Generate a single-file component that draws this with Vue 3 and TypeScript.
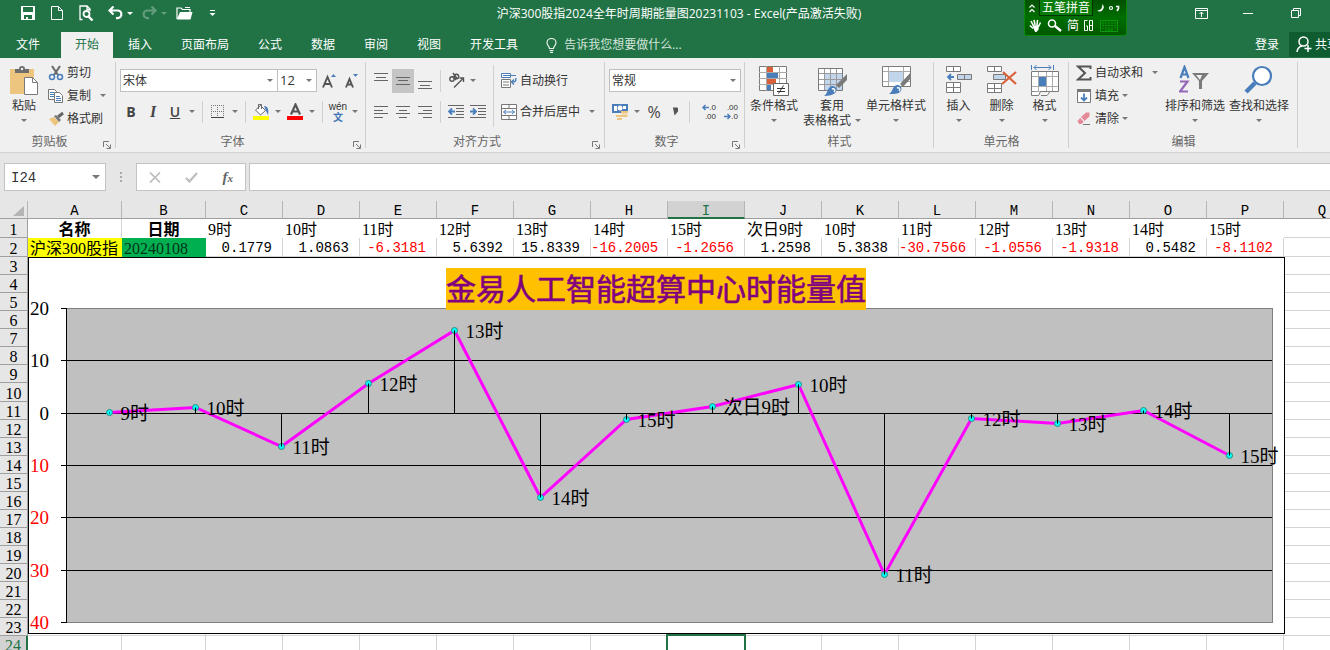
<script setup lang="ts">
interface Cell {
  label: string
  value: number
}

const series: Cell[] = [
  { label: '9时', value: 0.1779 },
  { label: '10时', value: 1.0863 },
  { label: '11时', value: -6.3181 },
  { label: '12时', value: 5.6392 },
  { label: '13时', value: 15.8339 },
  { label: '14时', value: -16.2005 },
  { label: '15时', value: -1.2656 },
  { label: '次日9时', value: 1.2598 },
  { label: '10时', value: 5.3838 },
  { label: '11时', value: -30.7566 },
  { label: '12时', value: -1.0556 },
  { label: '13时', value: -1.9318 },
  { label: '14时', value: 0.5482 },
  { label: '15时', value: -8.1102 },
]

const columns = 'ABCDEFGHIJKLMNOPQ'.split('')
const blankRows = Array.from({ length: 22 }, (_, i) => i + 3)
const tabs = ['插入', '页面布局', '公式', '数据', '审阅', '视图', '开发工具']

const plot = { left: 38, right: 1244, top: 51, bottom: 365, max: 20, min: -40 }
const scale = (plot.bottom - plot.top) / (plot.max - plot.min)
const step = (plot.right - plot.left) / series.length
const yOf = (v: number) => Math.round(plot.top + (plot.max - v) * scale) + 0.5
const points = series.map((s, i) => ({
  label: s.label,
  x: Math.round(plot.left + step * (i + 0.5)) + 0.5,
  y: yOf(s.value),
}))
const path = points.map((p) => `${p.x},${p.y}`).join(' ')
const ticks = [20, 10, 0, -10, -20, -30, -40]
</script>

<template>
  <div class="app">
    <header class="titlebar">
      <div class="qat">
        <button class="q" aria-label="保存">
          <svg width="14" height="14" viewBox="0 0 14 14"><path d="M0 0h14v14H0z" fill="#fff" /><path d="M2 1h10v5H2zM3 9h8v4H7v-2H5v2H3z" fill="#217346" /></svg>
        </button>
        <button class="q" aria-label="新建">
          <svg width="12" height="14" viewBox="0 0 12 14"><path d="M.5.5h7l4 4v9H.5zM7.500 .5v4h4" fill="none" stroke="#fff" /></svg>
        </button>
        <button class="q" aria-label="打印预览">
          <svg width="15" height="16" viewBox="0 0 15 16"><path d="M3.500 14.500H1V1h7l3 3v2M8 1v3.500h3" fill="none" stroke="#fff" stroke-width="1.300" /><circle cx="7.500" cy="9" r="3" fill="none" stroke="#fff" stroke-width="1.800" /><path d="M9.500 11.500l4 4" stroke="#fff" stroke-width="2.400" /></svg>
        </button>
        <button class="q q-undo" aria-label="撤消">
          <svg width="15" height="14" viewBox="0 0 15 14"><path d="M1 4.500h8.500a3.800 3.800 0 0 1 0 7.700H8M5.500 .5L1.500 4.500l4 4" fill="none" stroke="#fff" stroke-width="2.200" /></svg>
          <i class="caret light"></i>
        </button>
        <button class="q q-undo dim" aria-label="恢复">
          <svg width="15" height="14" viewBox="0 0 15 14"><path d="M14 4.500H5.500a3.800 3.800 0 0 0 0 7.700H7M9.500 .5l4 4-4 4" fill="none" stroke="#fff" stroke-width="2.200" /></svg>
          <i class="caret light"></i>
        </button>
        <button class="q" aria-label="打开">
          <svg width="17" height="14" viewBox="0 0 17 14"><path d="M1 13V2h4l1.500 1.500H14V6" fill="none" stroke="#fff" stroke-width="1.200" /><path d="M1 13L4 6h12.500L14.500 13.500H1z" fill="#fff" /><path d="M9 1.500h5" stroke="#fff" /></svg>
        </button>
        <button class="q q-more" aria-label="自定义快速访问工具栏">
          <svg width="7" height="7" viewBox="0 0 7 7"><path d="M1 .5h5" stroke="#fff" /><path d="M.5 3h6L3.500 6z" fill="#fff" /></svg>
        </button>
      </div>
      <h1>沪深300股指2024全年时周期能量图20231103 - Excel(产品激活失败)</h1>
      <div class="winctl">
        <button aria-label="功能区显示选项">
          <svg width="13" height="11" viewBox="0 0 13 11"><path d="M.5.5h12v10H.5zM.5 2.500h12M6.500 4v5M4.500 6l2-2 2 2" fill="none" stroke="#fff" /></svg>
        </button>
        <button aria-label="最小化"><svg width="10" height="11" viewBox="0 0 10 11"><path d="M0 5.500h10" stroke="#fff" /></svg></button>
        <button aria-label="还原"><svg width="10" height="10" viewBox="0 0 10 10"><path d="M.5 2.500h7v7h-7zM2.500 2.500v-2h7v7h-2" fill="none" stroke="#fff" /></svg></button>
      </div>
    </header>

    <nav class="tabs">
      <button class="file">文件</button>
      <button class="tab active">开始</button>
      <button v-for="t in tabs" :key="t" class="tab">{{ t }}</button>
      <button class="tell">
        <svg width="11" height="15" viewBox="0 0 11 15"><path d="M3.500 10.500C3.500 8 1 7.500 1 4.800a4.500 4.300 0 0 1 9 0C10 7.500 7.500 8 7.500 10.500zM3.500 12.500h4M4 14.300h3" fill="none" stroke="#e6f0ea" stroke-width="1.200" /></svg>
        告诉我您想要做什么...
      </button>
      <button class="login">登录</button>
      <button class="share">
        <svg width="16" height="17" viewBox="0 0 16 17"><circle cx="7.500" cy="5.500" r="4.500" fill="none" stroke="#fff" stroke-width="1.500" /><path d="M1 16c.5-4 2.500-5.500 5-6M12 9v7M8.500 12.500h7" fill="none" stroke="#fff" stroke-width="1.500" /></svg>
        <span>共享</span>
      </button>
    </nav>

    <aside class="ime" aria-label="输入法">
      <div class="ime-row">
        <svg width="6" height="9" viewBox="0 0 6 9"><path d="M.5 3.500L3 1l2.500 2.500M.5 8L3 5.500 5.500 8" fill="none" stroke="#fff" stroke-width="1.200" /></svg>
        <b>五笔拼音</b>
        <svg width="24" height="10" viewBox="0 0 24 10"><path d="M5 1a4 4 0 1 1-5 6.500C4 8 6 4 5 1z" fill="#fff" /><circle cx="14" cy="5" r="1.500" fill="none" stroke="#fff" stroke-width="1.200" /><path d="M19 3.500h2.500v2L20 8" fill="none" stroke="#fff" stroke-width="1.600" /></svg>
      </div>
      <div class="ime-row low">
        <svg width="13" height="13" viewBox="0 0 13 13"><path d="M2 2l2.500 5M5 .8L6 6M8.500 1L8 6M11.500 3.500L9.500 7.500M.8 6.500l3.500 3" stroke="#fff" stroke-width="1.600" /><path d="M3.500 6.500l6.500-.5-.5 4.500-2 2.500H6z" fill="#fff" /></svg>
        <svg width="15" height="13" viewBox="0 0 15 13"><circle cx="5" cy="4.500" r="3.500" fill="none" stroke="#fff" stroke-width="1.600" /><path d="M8 7l6 5" stroke="#fff" stroke-width="2.400" /></svg>
        <span>简</span>
        <svg width="9" height="11" viewBox="0 0 9 11"><path d="M3.500 .5h-3v10h3V6H2M5.500 .5h3v10h-3zM5.500 5.500h3" fill="none" stroke="#fff" /></svg>
        <svg width="18" height="12" viewBox="0 0 18 12"><path d="M.5.5h17v11H.5z" fill="none" stroke="#0a9a0a" /><path d="M2 3h14M2 5.500h14M2 8h14" stroke="#0a9a0a" stroke-dasharray="2 1" /><path d="M5 10h8" stroke="#0a9a0a" /></svg>
      </div>
    </aside>

    <section class="ribbon">
      <div class="group g-clip">
        <div class="body">
          <button class="big paste">
            <svg width="28" height="32" viewBox="0 0 28 32"><path d="M0 4h24v25H0z" fill="#eec57e" /><path d="M5 8V4h4a3 3 0 0 1 6 0h4v4z" fill="#6d6d6d" /><circle cx="12" cy="4" r="1.200" fill="#f0f0f0" /><path d="M14.500 12.500h8l5 5v12h-13z" fill="#fff" stroke="#7a7a7a" /><path d="M22.500 12.500v5h5" fill="none" stroke="#7a7a7a" /></svg>
            <span>粘贴</span>
            <i class="caret"></i>
          </button>
          <div class="stack">
            <button class="small">
              <svg width="16" height="16" viewBox="0 0 16 16"><path d="M4 1l6 9M12 1L6 10" stroke="#666" stroke-width="2" /><circle cx="4" cy="12" r="2.500" fill="none" stroke="#4a7ebb" stroke-width="1.500" /><circle cx="12" cy="12" r="2.500" fill="none" stroke="#4a7ebb" stroke-width="1.500" /></svg>
              <span>剪切</span>
            </button>
            <button class="small">
              <svg width="16" height="16" viewBox="0 0 16 16"><path d="M.5 1.500h6l2 2v8h-8z" fill="#fff" stroke="#777" /><path d="M2 4.500h4M2 6.500h4M2 8.500h4" stroke="#4a7ebb" /><path d="M6.500 4.500h5l3 3v7h-8z" fill="#fff" stroke="#777" /><path d="M8 8.500h4M8 10.500h5M8 12.500h5" stroke="#4a7ebb" /></svg>
              <span>复制</span>
              <i class="caret far"></i>
            </button>
            <button class="small">
              <svg width="16" height="16" viewBox="0 0 16 16"><path d="M1 8l5-2 5 5-4 4z" fill="#eec57e" /><path d="M6 5l2-1 5 5-2 2z" fill="#777" /><path d="M10 6l5-4" stroke="#666" stroke-width="3" /></svg>
              <span>格式刷</span>
            </button>
          </div>
        </div>
        <div class="caption"><span>剪贴板</span><button class="launch" aria-label="剪贴板选项"><svg width="8" height="8" viewBox="0 0 8 8"><path d="M.5 6V.5H6M3 3l4 4M7.500 3.500v4h-4" fill="none" stroke="#777" /></svg></button></div>
      </div>

      <div class="group g-font">
        <div class="body rows">
          <div class="line">
            <label class="pick font"><select aria-label="字体"><option>宋体</option></select><i class="caret"></i></label>
            <label class="pick size"><select aria-label="字号"><option>12</option></select><i class="caret"></i></label>
            <button class="ic grow" aria-label="增大字号"><svg width="15" height="16" viewBox="0 0 15 16"><path d="M1 14.500L5.500 4 10 14.500M2.500 11h6" fill="none" stroke="#555" stroke-width="1.900" /><path d="M9 4l2.500-3L14 4z" fill="#4a7ebb" /></svg></button>
            <button class="ic grow" aria-label="减小字号"><svg width="15" height="16" viewBox="0 0 15 16"><path d="M1 14.500L4.500 6 8 14.500M2 11.500h5" fill="none" stroke="#555" stroke-width="1.900" /><path d="M8 1h5l-2.500 3z" fill="#4a7ebb" /></svg></button>
          </div>
          <div class="line">
            <button class="ic glyph"><b>B</b></button>
            <button class="ic glyph it"><em>I</em></button>
            <button class="ic glyph"><u>U</u></button>
            <button class="drop" aria-label="下划线选项"><i class="caret"></i></button>
            <i class="sep"></i>
            <button class="ic" aria-label="边框"><svg width="14" height="14" viewBox="0 0 14 14"><path d="M.5 0v13M6.500 0v13M12.500 0v13M0 .5h13M0 6.500h13" stroke="#777" stroke-dasharray="1 1" /><path d="M0 12.500h13" stroke="#444" /></svg></button>
            <button class="drop" aria-label="边框选项"><i class="caret"></i></button>
            <i class="sep"></i>
            <button class="ic" aria-label="填充颜色"><svg width="17" height="17" viewBox="0 0 17 17"><path d="M2.500 7l5-4.500 5 5-5 4.500z" fill="#fff" stroke="#666" /><path d="M5.500 6V1.500h3V6" fill="none" stroke="#666" /><path d="M11 3c4 0 5 4 4 9l-2-4z" fill="#4a7ebb" /><path d="M0 13h16v4H0z" fill="#ff0" /></svg></button>
            <button class="drop" aria-label="填充颜色选项"><i class="caret"></i></button>
            <button class="ic" aria-label="字体颜色"><svg width="17" height="17" viewBox="0 0 17 17"><path d="M4 11.500L8.500 1.500l4.500 10M5.500 8.500h6" fill="none" stroke="#555" stroke-width="2.200" /><path d="M0 13h16v4H0z" fill="#f00" /></svg></button>
            <button class="drop" aria-label="字体颜色选项"><i class="caret"></i></button>
            <i class="sep"></i>
            <button class="ic wen" aria-label="拼音指南"><span>wén</span><span class="zh">文</span></button>
            <button class="drop" aria-label="拼音选项"><i class="caret"></i></button>
          </div>
        </div>
        <div class="caption"><span>字体</span><button class="launch" aria-label="字体选项"><svg width="8" height="8" viewBox="0 0 8 8"><path d="M.5 6V.5H6M3 3l4 4M7.500 3.500v4h-4" fill="none" stroke="#777" /></svg></button></div>
      </div>

      <div class="group g-align">
        <div class="body rows">
          <div class="line">
            <button class="ic" aria-label="顶端对齐"><svg width="14" height="16" viewBox="0 0 14 16"><path d="M0 .5h14M2 4.500h10M0 7.500h14" stroke="#666" /></svg></button>
            <button class="ic on" aria-label="垂直居中"><svg width="14" height="16" viewBox="0 0 14 16"><path d="M0 4.500h14M2 7.500h10M0 11.500h14" stroke="#666" /></svg></button>
            <button class="ic" aria-label="底端对齐"><svg width="14" height="16" viewBox="0 0 14 16"><path d="M0 8.500h14M2 12.500h10M0 15.500h14" stroke="#666" /></svg></button>
            <i class="sep"></i>
            <button class="ic" aria-label="方向"><svg width="17" height="17" viewBox="0 0 17 17"><g fill="none" stroke="#555" stroke-width="1.400"><circle cx="4" cy="7" r="2.200" /><path d="M4.500 4.500l3.500 3.500" /><circle cx="8.500" cy="4.500" r="2.200" /><path d="M5 1l4 5.500M6 15.500L15 6.500M11.500 6h4v4" /></g></svg></button>
            <button class="drop" aria-label="方向选项"><i class="caret"></i></button>
            <i class="sep tall after-drop"></i>
            <button class="small wide">
              <svg width="16" height="16" viewBox="0 0 16 16"><path d="M.5 .5h9v4h-9z" fill="#fff" stroke="#4a7ebb" /><path d="M2 2.500h13" stroke="#4a7ebb" /><path d="M.5 6.500h9v8h-9z" fill="#fff" stroke="#777" /><path d="M2 9h6M2 12h6" stroke="#777" /><path d="M15 5c0 4-1 4-4.500 4M13 6.500L10.500 9l2.500 2.500" fill="none" stroke="#4a7ebb" stroke-width="1.400" /></svg>
              <span>自动换行</span>
            </button>
          </div>
          <div class="line">
            <button class="ic" aria-label="左对齐"><svg width="14" height="12" viewBox="0 0 14 12"><path d="M0 .5h14M0 4.500h9M0 7.500h14M0 11.500h9" stroke="#666" /></svg></button>
            <button class="ic" aria-label="居中"><svg width="14" height="12" viewBox="0 0 14 12"><path d="M0 .5h14M3 4.500h8M0 7.500h14M3 11.500h8" stroke="#666" /></svg></button>
            <button class="ic" aria-label="右对齐"><svg width="14" height="12" viewBox="0 0 14 12"><path d="M0 .5h14M5 4.500h9M0 7.500h14M5 11.500h9" stroke="#666" /></svg></button>
            <i class="sep"></i>
            <button class="ic" aria-label="减少缩进"><svg width="16" height="13" viewBox="0 0 16 13"><path d="M0 .5h16M8 3.500h8M8 6.500h8M8 9.500h8M0 12.500h16" stroke="#666" /><path d="M1 6.500h6M4 3.500l-3 3 3 3" fill="none" stroke="#4a7ebb" stroke-width="1.800" /></svg></button>
            <button class="ic" aria-label="增加缩进"><svg width="16" height="13" viewBox="0 0 16 13"><path d="M0 .5h16M8 3.500h8M8 6.500h8M8 9.500h8M0 12.500h16" stroke="#666" /><path d="M0 6.500h6M3 3.500l3 3-3 3" fill="none" stroke="#4a7ebb" stroke-width="1.800" /></svg></button>
            <i class="sep tall"></i>
            <button class="small wide">
              <svg width="16" height="16" viewBox="0 0 16 16"><path d="M.5.5h15v15H.5zM.5 4.500h15M.5 11.500h15M8 .5v4M8 11.500v4" fill="#fff" stroke="#777" /><path d="M2.500 8h11M5 6L2.500 8 5 10M11 6l2.500 2L11 10" fill="none" stroke="#4a7ebb" /></svg>
              <span>合并后居中</span>
              <i class="caret far"></i>
            </button>
          </div>
        </div>
        <div class="caption"><span>对齐方式</span><button class="launch" aria-label="对齐选项"><svg width="8" height="8" viewBox="0 0 8 8"><path d="M.5 6V.5H6M3 3l4 4M7.500 3.500v4h-4" fill="none" stroke="#777" /></svg></button></div>
      </div>

      <div class="group g-num">
        <div class="body rows">
          <div class="line">
            <label class="pick format"><select aria-label="数字格式"><option>常规</option></select><i class="caret"></i></label>
          </div>
          <div class="line">
            <button class="ic" aria-label="会计格式"><svg width="17" height="17" viewBox="0 0 17 17"><path d="M0 1h16v9H0z" fill="#4a7ebb" /><path d="M2 3h3v5H2zM11 3h3v3h-3z" fill="#fff" /><circle cx="8" cy="5" r="2.500" fill="#fff" /><path d="M9 8h7v2.500H9zM9.500 11.500h6V14h-6zM4 12h6v2H4zM5 15h5v2H5z" fill="#eec57e" /></svg></button>
            <button class="drop" aria-label="会计格式选项"><i class="caret"></i></button>
            <button class="ic glyph pct">%</button>
            <button class="ic comma" aria-label="千位分隔"><svg width="7" height="11" viewBox="0 0 7 11"><path d="M1 2h4.500v3.500L2.500 9" fill="#555" stroke="#555" /></svg></button>
            <i class="sep"></i>
            <button class="ic dec" aria-label="增加小数位数"><span><svg width="7" height="9" viewBox="0 0 7 9"><path d="M1 4.500h6M3.500 2L1 4.500 3.500 7" fill="none" stroke="#4a7ebb" stroke-width="1.500" /></svg>.0</span><span>.00</span></button>
            <button class="ic dec" aria-label="减少小数位数"><span>.00</span><span><svg width="7" height="9" viewBox="0 0 7 9"><path d="M0 4.500h6M3.500 2L6 4.500 3.500 7" fill="none" stroke="#4a7ebb" stroke-width="1.500" /></svg>.0</span></button>
          </div>
        </div>
        <div class="caption"><span>数字</span><button class="launch" aria-label="数字选项"><svg width="8" height="8" viewBox="0 0 8 8"><path d="M.5 6V.5H6M3 3l4 4M7.500 3.500v4h-4" fill="none" stroke="#777" /></svg></button></div>
      </div>

      <div class="group g-style">
        <div class="body bigs">
          <button class="big">
            <svg width="32" height="32" viewBox="0 0 32 32"><path d="M1.500 1.500h27v24h-27z" fill="#fff" stroke="#7a7a7a" /><path d="M8.500 1v25M21.500 1v25M1 7.500h28M1 13.500h28M1 19.500h28" stroke="#aaa" /><path d="M9 2h6v5H9zM9 14h9v5H9z" fill="#d9603b" /><path d="M9 8h11v5H9zM9 20h4v5H9z" fill="#4a7ebb" /><path d="M15.500 18.500h15v12h-15z" fill="#fff" stroke="#666" /><path d="M19 23.500h8M19 26.500h8M25.500 20.500l-5 8" stroke="#333" /></svg>
            <span>条件格式</span>
            <i class="caret"></i>
          </button>
          <button class="big">
            <svg width="32" height="32" viewBox="0 0 32 32"><path d="M2.500 3.500h24v22h-24z" fill="#fff" stroke="#7a7a7a" /><path d="M9 9h17v16H9z" fill="#c3d5ea" /><path d="M8.500 4v21M14.500 4v21M20.500 4v21M3 8.500h23M3 14.500h23M3 19.500h23" stroke="#9a9a9a" /><path d="M31 9v6l-8 8-3-3z" fill="#7a7a7a" /><path d="M8 31c4-2 3-9 8-10 4-.5 6 4 3 7-2 2-6 3-11 3z" fill="#4a7ebb" /><path d="M16 24c2-1 4 1 2 3" fill="none" stroke="#fff" stroke-width="1.500" /></svg>
            <span>套用</span>
            <span class="two">表格格式<i class="caret"></i></span>
          </button>
          <button class="big">
            <svg width="32" height="32" viewBox="0 0 32 32"><path d="M2.500 1.500h28v20h-28z" fill="#fff" stroke="#7a7a7a" /><path d="M8.500 2v19M23.500 2v19M3 6.500h27M3 16.500h27" stroke="#aaa" /><path d="M9 7h14v10H9z" fill="#c3d5ea" /><path d="M31 7v6l-8 9-3-3z" fill="#7a7a7a" /><path d="M9 29c4-2 3-8 8-9 4-.5 6 4 3 7-2 2-6 2-11 2z" fill="#4a7ebb" /><path d="M17 23c2-1 4 1 2 3" fill="none" stroke="#fff" stroke-width="1.500" /></svg>
            <span>单元格样式</span>
            <i class="caret"></i>
          </button>
        </div>
        <div class="caption"><span>样式</span></div>
      </div>

      <div class="group g-cells">
        <div class="body bigs">
          <button class="big">
            <svg width="28" height="32" viewBox="0 0 28 32"><path d="M1.500 1.500h14v5h-14zM8.500 1.500v5M1.500 17.500h14v10h-14zM8.500 17.500v10M1.500 22.500h14" fill="#fff" stroke="#7a7a7a" /><path d="M12.500 9.500h14v5h-14zM19.500 9.500v5" fill="#c3d5ea" stroke="#7a7a7a" /><path d="M3 12h6M6 9l-3 3 3 3" fill="none" stroke="#4a7ebb" stroke-width="1.800" /></svg>
            <span>插入</span>
            <i class="caret"></i>
          </button>
          <button class="big">
            <svg width="32" height="32" viewBox="0 0 32 32"><path d="M1.500 1.500h14v5h-14zM8.500 1.500v5M1.500 18.500h14v9h-14zM8.500 18.500v9M1.500 23.500h14" fill="#fff" stroke="#7a7a7a" /><path d="M7.500 9.500h12v5h-12z" fill="#c3d5ea" stroke="#7a7a7a" /><path d="M17 7l13 12M30 7L16 19" stroke="#d9603b" stroke-width="2.200" /></svg>
            <span>删除</span>
            <i class="caret"></i>
          </button>
          <button class="big">
            <svg width="28" height="32" viewBox="0 0 28 32"><path d="M.5 0v5M22.500 0v5M3 2.500h17M5.500 0L3 2.500 5.500 5M17.500 0L20 2.500 17.500 5" fill="none" stroke="#4a7ebb" /><path d="M.5 6.500h27v20H.5z" fill="#fff" stroke="#7a7a7a" /><path d="M7.500 7v19M15.500 7v19M21.500 7v19M1 11.500h26M1 21.500h26" stroke="#aaa" /><path d="M8 12h7v9H8z" fill="#4a7ebb" /><path d="M.5 27v3.500h7l2-4M10 30.500h6l3-4" fill="#fff" stroke="#7a7a7a" /></svg>
            <span>格式</span>
            <i class="caret"></i>
          </button>
        </div>
        <div class="caption"><span>单元格</span></div>
      </div>

      <div class="group g-edit">
        <div class="body">
          <div class="stack">
            <button class="small">
              <svg width="16" height="16" viewBox="0 0 16 16"><path d="M14.500 4V1.500H2L9 8l-7 6.500h12.500V12" fill="none" stroke="#555" stroke-width="2" /></svg>
              <span>自动求和</span><i class="caret far"></i>
            </button>
            <button class="small">
              <svg width="16" height="16" viewBox="0 0 16 16"><path d="M1.500 1.500h13v13h-13z" fill="#fff" stroke="#777" /><path d="M1 1h14v3H1z" fill="#777" /><path d="M8 5.500v7M5 9.500l3 3 3-3" fill="none" stroke="#4a7ebb" stroke-width="1.800" /></svg>
              <span>填充</span><i class="caret"></i>
            </button>
            <button class="small">
              <svg width="16" height="16" viewBox="0 0 16 16"><path d="M5 6l5-4.500h3.500v4L8.500 10z" fill="#e58a98" /><path d="M4.500 6.500L8 10.500 5.500 13H3L1.500 10z" fill="#e58a98" /><path d="M7 13.500h7" stroke="#777" /><path d="M4.500 6.500L8 10.500" stroke="#fff" /></svg>
              <span>清除</span><i class="caret"></i>
            </button>
          </div>
          <button class="big">
            <svg width="32" height="32" viewBox="0 0 32 32"><path d="M1.500 13L5.500 2l4 11M3 9.500h5" fill="none" stroke="#4a7ebb" stroke-width="2.200" /><path d="M1 16.500h7.500L1 26.500h8" fill="none" stroke="#9467b8" stroke-width="2.200" /><path d="M13 8h17l-7 8v8h-3v-8z" fill="#7a7a7a" /><path d="M17 10h6l-2 5z" fill="#f0f0f0" /></svg>
            <span>排序和筛选</span>
            <i class="caret"></i>
          </button>
          <button class="big">
            <svg width="32" height="32" viewBox="0 0 32 32"><path d="M12 18L3 27" stroke="#4a7ebb" stroke-width="4.500" /><circle cx="19" cy="11" r="9" fill="#fff" stroke="#4a7ebb" stroke-width="2.200" /></svg>
            <span>查找和选择</span>
            <i class="caret"></i>
          </button>
        </div>
        <div class="caption"><span>编辑</span></div>
      </div>
    </section>

    <section class="formula">
      <div class="namebox"><input aria-label="名称框" value="I24" /><button aria-label="名称列表"><i class="caret big-caret"></i></button></div>
      <svg class="dots" width="2" height="10" viewBox="0 0 2 10"><path d="M0 0h2v2H0zM0 4h2v2H0zM0 8h2v2H0z" fill="#aaa" /></svg>
      <div class="fx">
        <button aria-label="取消"><svg width="12" height="11" viewBox="0 0 12 11"><path d="M1 .5l10 10M11 .5l-10 10" stroke="#bdbdbd" stroke-width="1.700" /></svg></button>
        <button aria-label="输入"><svg width="13" height="11" viewBox="0 0 13 11"><path d="M1 6l3.500 3.500L12 1" fill="none" stroke="#bdbdbd" stroke-width="2.200" /></svg></button>
        <button class="fn" aria-label="插入函数">f<small>x</small></button>
      </div>
      <input class="entry" aria-label="编辑栏" value="" />
    </section>

    <main class="sheet">
      <table>
        <colgroup>
          <col class="c-head" />
          <col class="c-a" />
          <col class="c-b" />
          <col v-for="n in 15" :key="n" class="c-n" />
        </colgroup>
        <thead>
          <tr>
            <th class="corner"><svg width="11" height="10" viewBox="0 0 11 10"><path d="M11 0v10H0z" fill="#b4b4b4" /></svg></th>
            <th v-for="c in columns" :key="c" scope="col" :class="{ sel: c === 'I' }">{{ c }}</th>
          </tr>
        </thead>
        <tbody>
          <tr class="r1">
            <th scope="row">1</th>
            <td class="name first">名称</td>
            <td class="name">日期</td>
            <td v-for="(s, i) in series" :key="i" class="hour">{{ s.label }}</td>
            <td class="rest"></td>
          </tr>
          <tr class="r2">
            <th scope="row">2</th>
            <td class="stock">沪深300股指</td>
            <td class="date">20240108</td>
            <td v-for="(s, i) in series" :key="i" class="num" :class="{ neg: s.value < 0 }">{{ s.value.toFixed(4) }}</td>
            <td></td>
          </tr>
          <tr v-for="r in blankRows" :key="r" :class="{ r10: r === 10, r24: r === 24 }">
            <th scope="row">{{ r }}</th>
            <td v-for="c in columns" :key="c" :class="{ cursor: r === 24 && c === 'I' }"></td>
          </tr>
        </tbody>
      </table>

      <svg class="chart" width="1257" height="377" viewBox="0 0 1257 377" role="img" aria-label="时能量值折线图">
        <rect x="0.5" y="0.5" width="1256" height="376" fill="#fff" stroke="#000" />
        <rect :x="plot.left + 0.5" :y="plot.top + 0.5" :width="plot.right - plot.left" :height="plot.bottom - plot.top" fill="#c0c0c0" stroke="#808080" />
        <g stroke="#000">
          <line v-for="t in ticks.slice(1, -1)" :key="t" :x1="plot.left" :x2="plot.right" :y1="yOf(t)" :y2="yOf(t)" />
          <line v-for="t in ticks" :key="'t' + t" :x1="plot.left - 5" :x2="plot.left" :y1="yOf(t)" :y2="yOf(t)" />
          <line :x1="plot.left + 0.5" :x2="plot.left + 0.5" :y1="plot.top" :y2="plot.bottom + 1" />
        </g>
        <text v-for="t in ticks" :key="'a' + t" class="axis" :class="{ neg: t < 0 }" x="21" :y="yOf(t) + 6" text-anchor="end">{{ Math.abs(t) }}</text>
        <polyline :points="path" fill="none" stroke="#f0f" stroke-width="3" />
        <circle v-for="(p, i) in points" :key="'c' + i" :cx="p.x" :cy="p.y" r="3" fill="#0ff" stroke="#2b8a78" />
        <line v-for="(p, i) in points" :key="'d' + i" :x1="p.x" :x2="p.x" :y1="yOf(0)" :y2="p.y" stroke="#000" />
        <text v-for="(p, i) in points" :key="'l' + i" class="axis" :x="p.x + 11" :y="p.y + 7">{{ p.label }}</text>
        <rect x="418" y="11" width="420" height="42" fill="#ffc000" />
        <text class="title" x="628" y="43" text-anchor="middle">金易人工智能超算中心时能量值</text>
      </svg>
    </main>
  </div>
</template>

<style>
html,
body {
  margin: 0;
  overflow: hidden;
}
</style>

<style scoped>
.app {
  --ui: 'Open Sans', 'Noto Sans CJK SC', sans-serif;
  --song: 'Liberation Serif', 'Noto Sans CJK SC', serif;
  --mono: 'Liberation Mono', 'Noto Sans CJK SC', monospace;
  position: relative;
  display: flex;
  flex-direction: column;
  height: 100vh;
  overflow: hidden;
  background: #e6e6e6;
  font: 12px/16px var(--ui);
  color: #333;
}
* {
  box-sizing: border-box;
}
button {
  margin: 0;
  padding: 0;
  border: 0;
  background: none;
  color: inherit;
  font: inherit;
  white-space: nowrap;
}
svg {
  display: block;
  flex: none;
}
.caret {
  display: block;
  flex: none;
  width: 0;
  height: 0;
  border: 3px solid transparent;
  border-top-color: #777;
  border-bottom: 0;
}
.caret.light {
  border-top-color: #fff;
}

/* title bar */
.titlebar {
  display: flex;
  align-items: center;
  flex: none;
  height: 32px;
  padding-bottom: 6px;
  background: #217346;
  color: #fff;
}
.qat {
  display: flex;
  align-items: center;
  gap: 16px;
  width: 260px;
  padding-left: 21px;
}
.q {
  display: flex;
  align-items: center;
  gap: 4px;
}
.q-undo {
  margin-right: -7px;
}
.q-undo:not(.dim) {
  margin-left: -2px;
}
.q.dim {
  opacity: 0.3;
}
h1 {
  flex: 1;
  margin: 0;
  padding-top: 2px;
  font: 12px/16px var(--ui);
  text-align: center;
  white-space: nowrap;
}
.winctl {
  display: flex;
  align-items: center;
  gap: 38px;
  width: 232px;
  padding-left: 97px;
}
.winctl button:first-child {
  margin-right: -3px;
}

/* tabs */
.tabs {
  display: flex;
  flex: none;
  height: 26px;
  background: #217346;
  color: #fff;
  gap: 1px;
}
.file {
  width: 56px;
  margin-right: 4px;
}
.tab {
  padding: 0 14px;
}
.tab.active {
  background: #f0f0f0;
  color: #217346;
}
.tell {
  display: flex;
  align-items: center;
  gap: 7px;
  margin-left: 13px;
  color: #d5e5dc;
}
.login {
  margin-left: auto;
}
.share {
  display: flex;
  align-items: center;
  gap: 3px;
  width: 41px;
  height: 25px;
  margin-left: 9px;
  padding-left: 7px;
  overflow: hidden;
  background: #0e5c30;
}

/* floating input-method bar */
.ime {
  position: absolute;
  top: 0;
  left: 1024px;
  width: 103px;
  height: 36px;
  border: 1px solid #078a07;
  border-top: 0;
  border-radius: 0 0 3px 3px;
  background: linear-gradient(#005000, #006e00 50%, #005800);
  color: #fff;
}
.ime-row {
  display: flex;
  align-items: center;
  gap: 4px;
  height: 16px;
  padding-left: 4px;
}
.ime-row b {
  padding: 0 2px;
  border: 1px solid #003400;
  border-top: 0;
  background: #0a7c0a;
  font-weight: 400;
  line-height: 15px;
}
.ime-row.low {
  gap: 5px;
  height: 19px;
}
.ime-row.low svg:last-child {
  margin-left: 2px;
}

/* ribbon */
.ribbon {
  display: flex;
  flex: none;
  height: 95px;
  border-bottom: 1px solid #d2d2d2;
  background: #f0f0f0;
}
.group {
  display: flex;
  flex-direction: column;
  flex: none;
  padding-top: 3px;
  background: linear-gradient(#cfcfcf, #cfcfcf) right 4px / 1px 86px no-repeat;
}
.g-clip { width: 116px; }
.g-font { width: 250px; }
.g-align { width: 239px; }
.g-num { width: 140px; }
.g-style { width: 189px; }
.g-cells { width: 135px; }
.g-edit { width: 229px; }
.body {
  display: flex;
  height: 71px;
}
.body.rows {
  flex-direction: column;
  padding: 4px 0 0 4px;
}
.line {
  display: flex;
  align-items: center;
  height: 31px;
}
.caption {
  display: flex;
  height: 20px;
  line-height: 20px;
  color: #666;
}
.caption span {
  flex: 1;
  text-align: center;
}
.launch {
  display: flex;
  align-items: center;
  width: 17px;
  padding: 5px 0 0 4px;
}
.big {
  display: flex;
  flex-direction: column;
  align-items: center;
  padding-top: 4px;
  line-height: 15px;
}
.big svg {
  margin-bottom: 1px;
}
.big > .caret {
  margin-top: 6px;
}
.two {
  display: flex;
  align-items: center;
  gap: 4px;
}
.paste {
  width: 40px;
  margin: 0 4px;
}
.small {
  display: flex;
  align-items: center;
  gap: 3px;
  height: 23px;
}
.small .far {
  margin-left: 6px;
}
.g-style .bigs {
  gap: 5px;
  padding-left: 5px;
}
.g-cells .bigs {
  justify-content: center;
  gap: 13px;
}
.g-edit .body {
  gap: 4px;
}
.g-edit .stack {
  width: 85px;
  margin-left: 7px;
}
.ic {
  display: flex;
  align-items: center;
  justify-content: center;
  flex: none;
  width: 22px;
  height: 24px;
}
.ic.on {
  background: #c5c5c5;
}
.drop {
  display: flex;
  align-items: center;
  justify-content: center;
  width: 12px;
  height: 24px;
}
.glyph {
  font-size: 14px;
  color: #444;
}
.it em {
  font-family: 'Liberation Serif', serif;
  font-size: 16px;
  font-weight: 700;
}
.glyph u {
  font-weight: 600;
}
.pct {
  font-size: 16px;
}
.comma {
  width: 20px;
}
.sep {
  flex: none;
  width: 1px;
  height: 22px;
  margin: 0 4px;
  background: #d0d0d0;
}
.sep.tall {
  height: 31px;
  margin: 0 7px 0 4px;
}
.sep.tall.after-drop {
  margin-left: 14px;
}
.wen {
  flex-direction: column;
  font: 10px/10px 'Liberation Sans', sans-serif;
}
.wen .zh {
  color: #3f76b5;
  font: 700 10px/10px 'Noto Sans CJK SC', sans-serif;
}
.dec {
  flex-direction: column;
  align-items: flex-end;
  font: 8px/9px 'Liberation Sans', sans-serif;
  color: #333;
}
.dec span {
  display: flex;
}
.pick {
  position: relative;
  display: flex;
  align-items: center;
  height: 23px;
  border: 1px solid #bfbfbf;
  background: #fff;
}
.pick select {
  width: 100%;
  height: 21px;
  padding: 0 2px;
  border: 0;
  appearance: none;
  background: none;
  color: #333;
  font: 12px/21px var(--ui);
}
.pick .caret {
  position: absolute;
  right: 4px;
}
.pick.font { width: 158px; }
.pick.size { width: 40px; margin-left: -1px; }
.pick.size select { font-size: 13px; }
.pick.format { width: 132px; }
.grow {
  margin-left: 1px;
}

/* formula bar */
.formula {
  display: flex;
  align-items: center;
  flex: none;
  height: 48px;
  padding-left: 4px;
}
.namebox,
.fx,
.entry {
  height: 28px;
  border: 1px solid #c3c3c3;
  background: #fff;
}
.namebox {
  display: flex;
  align-items: center;
  width: 102px;
}
.namebox input {
  flex: 1;
  width: 60px;
  padding: 2px 0 0 6px;
  border: 0;
  background: none;
  color: #333;
  font: 14px/20px var(--mono);
}
.namebox button {
  padding-right: 5px;
}
.big-caret {
  border-width: 4px 4px 0;
}
.dots {
  margin: 0 14px;
}
.fx {
  display: flex;
  align-items: center;
  justify-content: space-around;
  width: 110px;
}
.fn {
  color: #666;
  font: italic 700 15px/20px 'Liberation Serif', serif;
}
.fn small {
  font-size: 11px;
}
.entry {
  flex: 1;
  min-width: 0;
  margin-left: 3px;
  border-right: 0;
}

/* sheet */
.sheet {
  position: relative;
  flex: 1;
  overflow: hidden;
}
table {
  width: 1361px;
  border-spacing: 0;
  table-layout: fixed;
  font: 16px/14px var(--song);
  color: #000;
}
.c-head { width: 28px; }
.c-a { width: 94px; }
.c-b { width: 84px; }
.c-n { width: 77px; }
th,
td {
  height: 18px;
  padding: 3px 0 0;
  border-right: 1px solid #d4d4d4;
  border-bottom: 1px solid #d4d4d4;
  background: #fff;
  white-space: nowrap;
}
th {
  border-color: #9f9f9f;
  background: #e6e6e6;
  font-weight: 400;
}
thead th {
  padding-top: 4px;
  font: 14px/13px var(--mono);
  border-right-color: #b5b5b5;
}
thead th.sel {
  border-bottom: 2px solid #217346;
  background: #d2d2d2;
  color: #217346;
  line-height: 12px;
}
thead .corner {
  padding-top: 0;
}
.corner svg {
  margin: 2px 0 0 13px;
}
.r1 > *,
.r2 > * {
  height: 19px;
  line-height: 15px;
}
.r10 > * {
  height: 19px;
}
.r1 td {
  border-color: #fff;
}
.r1 .first {
  border-right-color: #d4d4d4;
}
.r1 .rest {
  border-bottom-color: #d4d4d4;
}
.name {
  font-weight: 700;
  text-align: center;
}
.hour {
  padding-left: 2px;
}
.r2 .stock {
  padding-left: 2px;
  border-color: #ff0;
  background: #ff0;
}
.r2 .date {
  padding-left: 2px;
  border-color: #00b050;
  background: #00b050;
  color: #00331a;
}
.num {
  padding-right: 10px;
  font: 14px/15px var(--mono);
  text-align: right;
}
.neg {
  color: #f00;
  fill: #f00;
}
.r24 th {
  border-right: 2px solid #217346;
  background: #d2d2d2;
  color: #217346;
}
.cursor {
  position: relative;
}
.cursor::after {
  content: '';
  position: absolute;
  inset: -2px;
  border: 2px solid #217346;
}
.chart {
  position: absolute;
  top: 56px;
  left: 28px;
}
.axis {
  font: 19px var(--song);
}
.title {
  fill: #800080;
  stroke: #800080;
  stroke-width: 0.6px;
  font: 400 30px 'Noto Sans CJK SC', sans-serif;
}
</style>
